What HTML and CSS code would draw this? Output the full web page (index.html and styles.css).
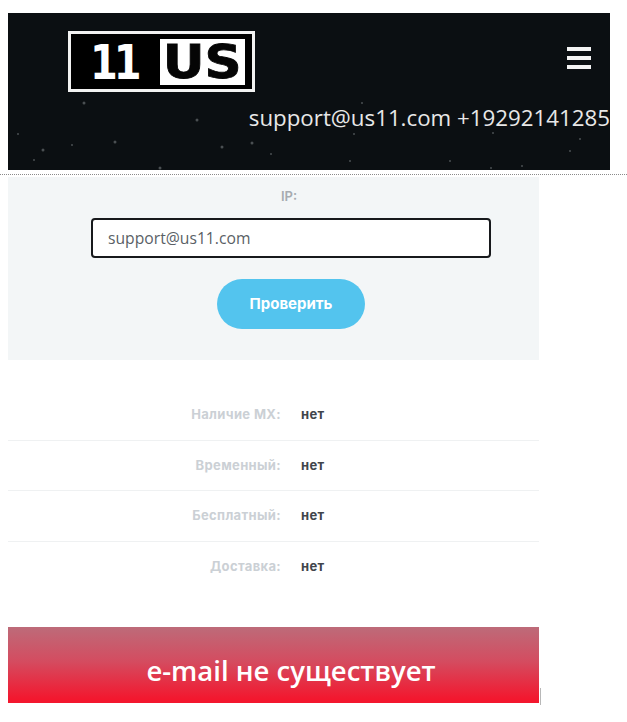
FILE: index.html
```html
<!DOCTYPE html>
<html lang="ru">
<head>
<meta charset="utf-8">
<title>11 US</title>
<link rel="stylesheet" href="styles.css">
</head>
<body>
<header class="hero">
  <svg class="stars" width="602" height="157" viewBox="0 0 602 157">
    <g fill="#4a4f52">
      <circle cx="76" cy="90" r="1.5"/><circle cx="189" cy="107" r="1.5"/><circle cx="10" cy="121" r="1"/>
      <circle cx="35" cy="137" r="1.5"/><circle cx="64" cy="132" r="1"/><circle cx="107" cy="129" r="1.5"/>
      <circle cx="214" cy="134" r="1.5"/><circle cx="244" cy="130" r="1.5"/><circle cx="263" cy="141" r="1"/>
      <circle cx="26" cy="147" r="1"/><circle cx="152" cy="155" r="1.5"/><circle cx="342" cy="148" r="1"/>
      <circle cx="354" cy="90" r="1"/><circle cx="346" cy="121" r="1"/><circle cx="483" cy="155" r="1"/>
      <circle cx="485" cy="120" r="1"/><circle cx="572" cy="126" r="1"/><circle cx="442" cy="148" r="1"/>
      <circle cx="514" cy="153" r="1"/><circle cx="562" cy="138" r="1"/>
    </g>
  </svg>
  <div class="hero-top">
    <div class="logo">
      <span class="logo-num">11</span>
      <span class="logo-us"><span class="logo-us-text">US</span></span>
    </div>
    <div class="burger"><i></i><i></i><i></i></div>
  </div>
  <div class="contacts">support@us11.com +19292141285</div>
</header>
<div class="divider"></div>
<main class="content">
  <section class="panel">
    <div class="ip-label">IP:</div>
    <input class="email-input" type="text" value="support@us11.com">
    <button class="check-btn" type="button">Проверить</button>
  </section>
  <section class="results">
    <div class="row"><span class="key">Наличие MX:</span><span class="val">нет</span></div>
    <div class="row"><span class="key">Временный:</span><span class="val">нет</span></div>
    <div class="row"><span class="key">Бесплатный:</span><span class="val">нет</span></div>
    <div class="row"><span class="key">Доставка:</span><span class="val">нет</span></div>
  </section>
  <div class="banner">e-mail не существует</div>
</main>
</body>
</html>
```
FILE: styles.css
```css
* { box-sizing: border-box; }
html, body { margin: 0; padding: 0; background: #fff; }
body { width: 627px; height: 722px; overflow: hidden; padding-top: 13px; font-family: "Inter", "Liberation Sans", sans-serif; }

.hero {
  position: relative;
  width: 602px;
  height: 157px;
  margin-left: 8px;
  background: #0b0f12;
  overflow: hidden;
}
.stars { position: absolute; left: 0; top: 0; }
.hero-top {
  position: relative;
  display: flex;
  justify-content: space-between;
  align-items: flex-start;
  padding: 18px 19px 0 60px;
}
.logo {
  width: 187px;
  height: 61px;
  background: #000;
  border: 3px solid #f2f2f2;
  display: flex;
  align-items: center;
  justify-content: space-between;
  padding: 5px 7px 5px 19px;
}
.logo-num {
  display: inline-block;
  font-family: "DejaVu Sans", sans-serif;
  font-weight: 700;
  font-size: 40px;
  line-height: 1;
  color: #fff;
  letter-spacing: -4px;
  transform: scaleY(1.2);
}
.logo-us {
  display: flex;
  align-items: center;
  justify-content: center;
  width: 85px;
  height: 46px;
  background: #fff;
  color: #050505;
  font-family: "DejaVu Sans", sans-serif;
  font-weight: 700;
  font-size: 46px;
  line-height: 46px;
}
.logo-us-text {
  display: inline-block;
  transform: scaleX(1.12);
  -webkit-text-stroke: 0.8px #050505;
}
.burger { display: flex; flex-direction: column; gap: 5px; margin-top: 16px; }
.burger i { display: block; width: 24px; height: 4px; background: #f4f4f4; }
.contacts {
  position: relative;
  margin-top: 11px;
  text-align: right;
  font-family: "Open Sans", sans-serif;
  font-size: 22.3px;
  line-height: 30px;
  color: #e8e8e8;
  white-space: nowrap;
}
.divider { height: 0; margin-top: 4px; border-top: 1px dotted #8a8a8a; }

.content { position: relative; width: 531px; margin: 2px 0 0 8px; }
.panel {
  height: 183px;
  background: #f3f6f7;
  display: flex;
  flex-direction: column;
  align-items: center;
  padding: 11px 0 0 35px;
}
.ip-label { margin-right: 4px; font-size: 13px; font-weight: 600; line-height: 16px; color: #a6abb0; }
.email-input {
  display: block;
  width: 400px;
  height: 40px;
  margin-top: 14px;
  padding: 0 15px;
  border: 2px solid #17191c;
  border-radius: 4px;
  background: #fff;
  font-family: "Open Sans", sans-serif;
  font-size: 15.7px;
  color: #5a5f66;
  outline: none;
}
.check-btn {
  width: 148px;
  height: 50px;
  margin-top: 21px;
  padding-bottom: 2px;
  border: 0;
  border-radius: 25px;
  background: #53c4ee;
  color: #fff;
  font-family: "Inter", sans-serif;
  font-size: 15px;
  font-weight: 700;
}
.results { padding-top: 30px; }
.row {
  display: grid;
  grid-template-columns: 273px 1fr;
  column-gap: 20px;
  align-items: center;
  height: 50.5px;
  padding-bottom: 1px;
  border-bottom: 1px solid #eff1f2;
  font-size: 13px;
  font-weight: 700;
  letter-spacing: 0.35px;
}
.row:last-child { border-bottom: 0; }
.key { text-align: right; color: #cbd0d5; }
.val { color: #41454b; }
.banner {
  height: 76px;
  margin-top: 35px;
  padding: 24px 0 0 35px;
  background: linear-gradient(#bd6b79 0%, #d44c60 45%, #f3172e 95%);
  color: #fff;
  text-align: center;
  font-family: "Open Sans", sans-serif;
  font-size: 27.5px;
  font-weight: 600;
  line-height: 40px;
}
.banner::after {
  content: "";
  position: absolute;
  left: 532px;
  bottom: -2px;
  width: 1px;
  height: 17px;
  background: #b8b8b8;
}
```
